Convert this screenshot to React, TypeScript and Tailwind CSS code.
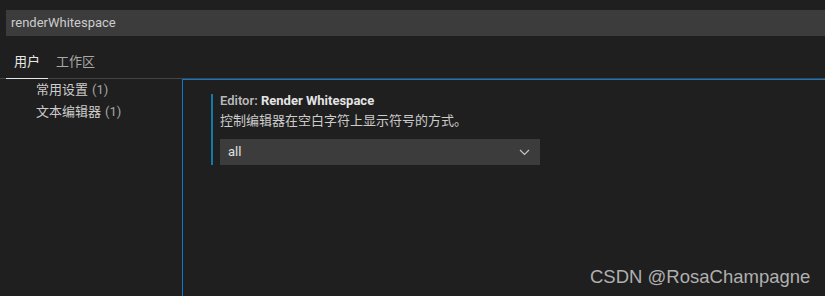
import React from "react";

const font = {
  fontFamily: 'Roboto, "Noto Sans CJK SC", sans-serif',
};

const App = () => {
  return (
    <div
      className="relative w-[825px] h-[296px] overflow-hidden bg-[#1f1f1f] flex flex-col"
      style={font}
    >
      {/* search */}
      <div className="pt-[10px] pl-[6px]">
        <div className="h-[26px] bg-[#3c3c3c] pl-[5px] flex items-center text-[13px] text-[#cccccc]">
          renderWhitespace
        </div>
      </div>

      {/* tabs */}
      <div className="h-[43px] flex pl-[6px] border-b border-[#444444]">
        <div className="px-2 pt-[10px] flex items-center text-[13px] text-[#e7e7e7] border-b border-[#e7e7e7] -mb-px">
          用户
        </div>
        <div className="px-2 pt-[10px] flex items-center text-[13px] text-[#a8a8a8]">
          工作区
        </div>
      </div>

      {/* body */}
      <div className="flex flex-1">
        <div className="w-[182px] pl-[36px] text-[13px] text-[#cccccc]">
          <div className="h-[22px] flex items-center">
            常用设置<span className="ml-1 text-[#a6a6a6]">(1)</span>
          </div>
          <div className="h-[22px] flex items-center">
            文本编辑器<span className="ml-1 text-[#a6a6a6]">(1)</span>
          </div>
        </div>

        <div className="flex-1 border-l border-t border-[#0a7ad0] pl-[28px] pt-[14px]">
          <div className="border-l-2 border-[#127aa8] pl-[7px]">
            <div className="text-[13px] leading-[14px]">
              <span className="font-semibold text-[#b8b8b8]">Editor: </span>
              <span className="font-bold text-[#e4e4e4]">Render Whitespace</span>
            </div>
            <div className="mt-[4px] text-[13px] leading-[18px] text-[#cccccc]">
              控制编辑器在空白字符上显示符号的方式。
            </div>
            <div className="mt-[9px] w-[320px] h-[26px] bg-[#3c3c3c] flex items-center justify-between pl-[8px] pr-[10px]">
              <span className="text-[13px] text-[#e0e0e0]">all</span>
              <svg width="11" height="7" viewBox="0 0 11 7" fill="none">
                <path d="M1 1L5.5 5.5L10 1" stroke="#c5c5c5" strokeWidth="1.2" />
              </svg>
            </div>
          </div>
        </div>
      </div>

      {/* watermark */}
      <div
        className="absolute left-[590px] top-[263px] text-[18.5px] text-[#b0b0b0]"
        style={{ fontFamily: '"Liberation Sans", Arial, sans-serif' }}
      >
        CSDN @RosaChampagne
      </div>
    </div>
  );
};

export default App;
